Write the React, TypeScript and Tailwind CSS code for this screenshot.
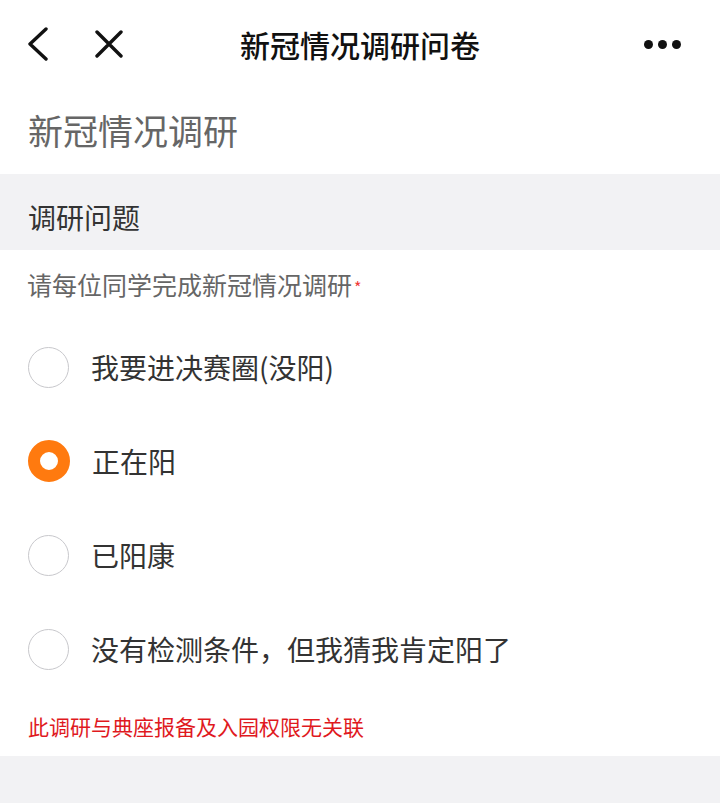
import React from "react";

const options = [
  { label: "我要进决赛圈(没阳)", checked: false },
  { label: "正在阳", checked: true },
  { label: "已阳康", checked: false },
  { label: "没有检测条件，但我猜我肯定阳了", checked: false },
];

export default function App() {
  return (
    <div
      className="w-[720px] h-[803px] bg-white overflow-hidden flex flex-col"
      style={{ fontFamily: '"Noto Sans CJK SC", "Noto Sans", sans-serif' }}
    >
      {/* Header */}
      <div className="relative h-[90px] flex items-center shrink-0">
        <div className="flex items-center pl-[27px] gap-[46px] pb-[2px]">
          <svg width="22" height="34" viewBox="0 0 22 34" fill="none">
            <path d="M19 2 L3 17 L19 32" stroke="#111" strokeWidth="3.4" strokeLinecap="round" strokeLinejoin="round" />
          </svg>
          <svg width="28" height="28" viewBox="0 0 28 28" fill="none">
            <path d="M2 2 L26 26 M26 2 L2 26" stroke="#111" strokeWidth="3.4" strokeLinecap="round" />
          </svg>
        </div>
        <div className="absolute left-0 right-0 top-0 h-[90px] flex items-center justify-center pointer-events-none pb-[2px]">
          <span className="text-[30px] font-medium text-[#111] leading-none">新冠情况调研问卷</span>
        </div>
        <div className="ml-auto pr-[39px] flex items-center gap-[5px] pb-[2px]">
          <span className="w-[9px] h-[9px] rounded-full bg-[#111]" />
          <span className="w-[9px] h-[9px] rounded-full bg-[#111]" />
          <span className="w-[9px] h-[9px] rounded-full bg-[#111]" />
        </div>
      </div>

      {/* Survey title */}
      <div className="h-[84px] flex items-center pl-[28px] shrink-0 pb-[6px]">
        <span className="text-[35px] text-[#666] leading-none">新冠情况调研</span>
      </div>

      {/* Section band */}
      <div className="h-[76px] bg-[#f2f2f4] flex items-center pl-[28px] pt-[10px] shrink-0">
        <span className="text-[28px] text-[#333] leading-none">调研问题</span>
      </div>

      {/* Question */}
      <div className="h-[71px] flex items-center pl-[27px] pb-[2px] shrink-0">
        <span className="text-[25px] text-[#666] leading-none">请每位同学完成新冠情况调研</span>
        <span className="text-[16px] text-[#f03a3a] leading-none ml-[2px] mt-[4px]">*</span>
      </div>

      {/* Options */}
      <div className="flex flex-col shrink-0">
        {options.map((o) => (
          <div key={o.label} className="h-[94px] flex items-center pl-[28px] pb-[2px]">
            {o.checked ? (
              <span className="w-[42px] h-[42px] rounded-full border-[12px] border-[#ff7a0f] bg-white shrink-0" />
            ) : (
              <span className="w-[41px] h-[41px] rounded-full border-[1.5px] border-[#c8c8cc] bg-white shrink-0" />
            )}
            <span className="ml-[22px] text-[28px] text-[#333] leading-none">{o.label}</span>
          </div>
        ))}
      </div>

      {/* Note */}
      <div className="h-[59px] flex items-center pl-[28px] shrink-0">
        <span className="text-[21px] text-[#e0191e] leading-none">此调研与典座报备及入园权限无关联</span>
      </div>

      {/* Bottom band */}
      <div className="flex-1 bg-[#f2f2f4]" />
    </div>
  );
}
